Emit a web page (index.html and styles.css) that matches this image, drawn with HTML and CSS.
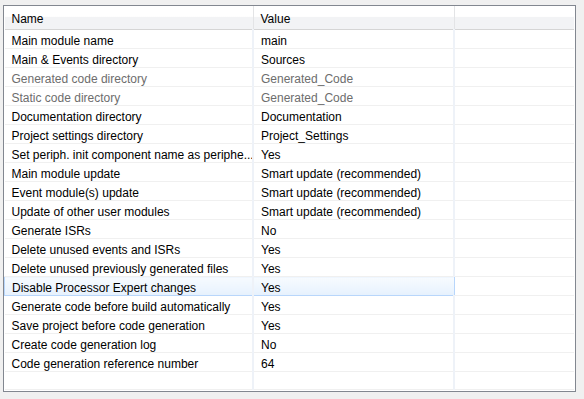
FILE: index.html
```html
<!DOCTYPE html>
<html lang="en">
<head>
    <meta charset="UTF-8">
    <title>Properties</title>
    <link rel="stylesheet" href="styles.css">
</head>
<body>
    <div class="frame">
        <table class="props">
            <thead>
                <tr>
                    <th class="col-name">Name</th>
                    <th class="col-value">Value</th>
                    <th class="col-rest"></th>
                </tr>
            </thead>
            <tbody>
                <tr><td>Main module name</td><td>main</td><td></td></tr>
                <tr><td>Main &amp; Events directory</td><td>Sources</td><td></td></tr>
                <tr class="disabled"><td>Generated code directory</td><td>Generated_Code</td><td></td></tr>
                <tr class="disabled"><td>Static code directory</td><td>Generated_Code</td><td></td></tr>
                <tr><td>Documentation directory</td><td>Documentation</td><td></td></tr>
                <tr><td>Project settings directory</td><td>Project_Settings</td><td></td></tr>
                <tr><td>Set periph. init component name as periphe...</td><td>Yes</td><td></td></tr>
                <tr><td>Main module update</td><td>Smart update (recommended)</td><td></td></tr>
                <tr><td>Event module(s) update</td><td>Smart update (recommended)</td><td></td></tr>
                <tr><td>Update of other user modules</td><td>Smart update (recommended)</td><td></td></tr>
                <tr><td>Generate ISRs</td><td>No</td><td></td></tr>
                <tr><td>Delete unused events and ISRs</td><td>Yes</td><td></td></tr>
                <tr><td>Delete unused previously generated files</td><td>Yes</td><td></td></tr>
                <tr class="selected"><td>Disable Processor Expert changes</td><td>Yes</td><td></td></tr>
                <tr><td>Generate code before build automatically</td><td>Yes</td><td></td></tr>
                <tr><td>Save project before code generation</td><td>Yes</td><td></td></tr>
                <tr><td>Create code generation log</td><td>No</td><td></td></tr>
                <tr><td>Code generation reference number</td><td>64</td><td></td></tr>
                <tr class="empty"><td></td><td></td><td></td></tr>
            </tbody>
        </table>
    </div>
</body>
</html>
```

FILE: styles.css
```css
body{
    margin: 0;
    background-color: #f0f0f0;
    font-family: "Liberation Sans", "Noto Sans", sans-serif;
    font-size: 12px;
    color: #000;
}
.frame{
    margin: 5px 0 0 3px;
    width: 571px;
    height: 385px;
    border: 1px solid #828790;
    background-color: #fff;
    overflow: hidden;
}
.props{
    border-collapse: collapse;
    table-layout: fixed;
    width: 570px;
}
.props th{
    height: 20px;
    padding: 3px 0 0 7px;
    text-align: left;
    font-weight: normal;
    background: linear-gradient(#ffffff 0%, #ffffff 45%, #f2f3f5 50%, #f2f3f5 100%);
    border-bottom: 1px solid #d5d5d5;
    border-right: 1px solid #e3e4e6;
}
.col-name{
    width: 241px;
}
.col-value{
    width: 193px;
}
.props th.col-rest{
    border-right: none;
}
.props td{
    height: 15px;
    padding: 3px 0 0 7px;
    white-space: nowrap;
    overflow: hidden;
    border-bottom: 1px solid #f0f0f0;
    border-right: 2px solid #eef2f8;
}
.props td:last-child{
    border-right: none;
}
.disabled td{
    color: #6d6d6d;
}
.selected td:first-child,
.selected td:nth-child(2){
    background: linear-gradient(#f7fbff, #e6f1fd);
    border-top: 1px solid #b8d6fb;
    border-bottom: 1px solid #b8d6fb;
}
.selected td:first-child{
    border-left: 1px solid #b8d6fb;
}
.selected td:nth-child(2){
    border-right: 1px solid #b8d6fb;
}
.empty td{
    height: 14px;
}
```
